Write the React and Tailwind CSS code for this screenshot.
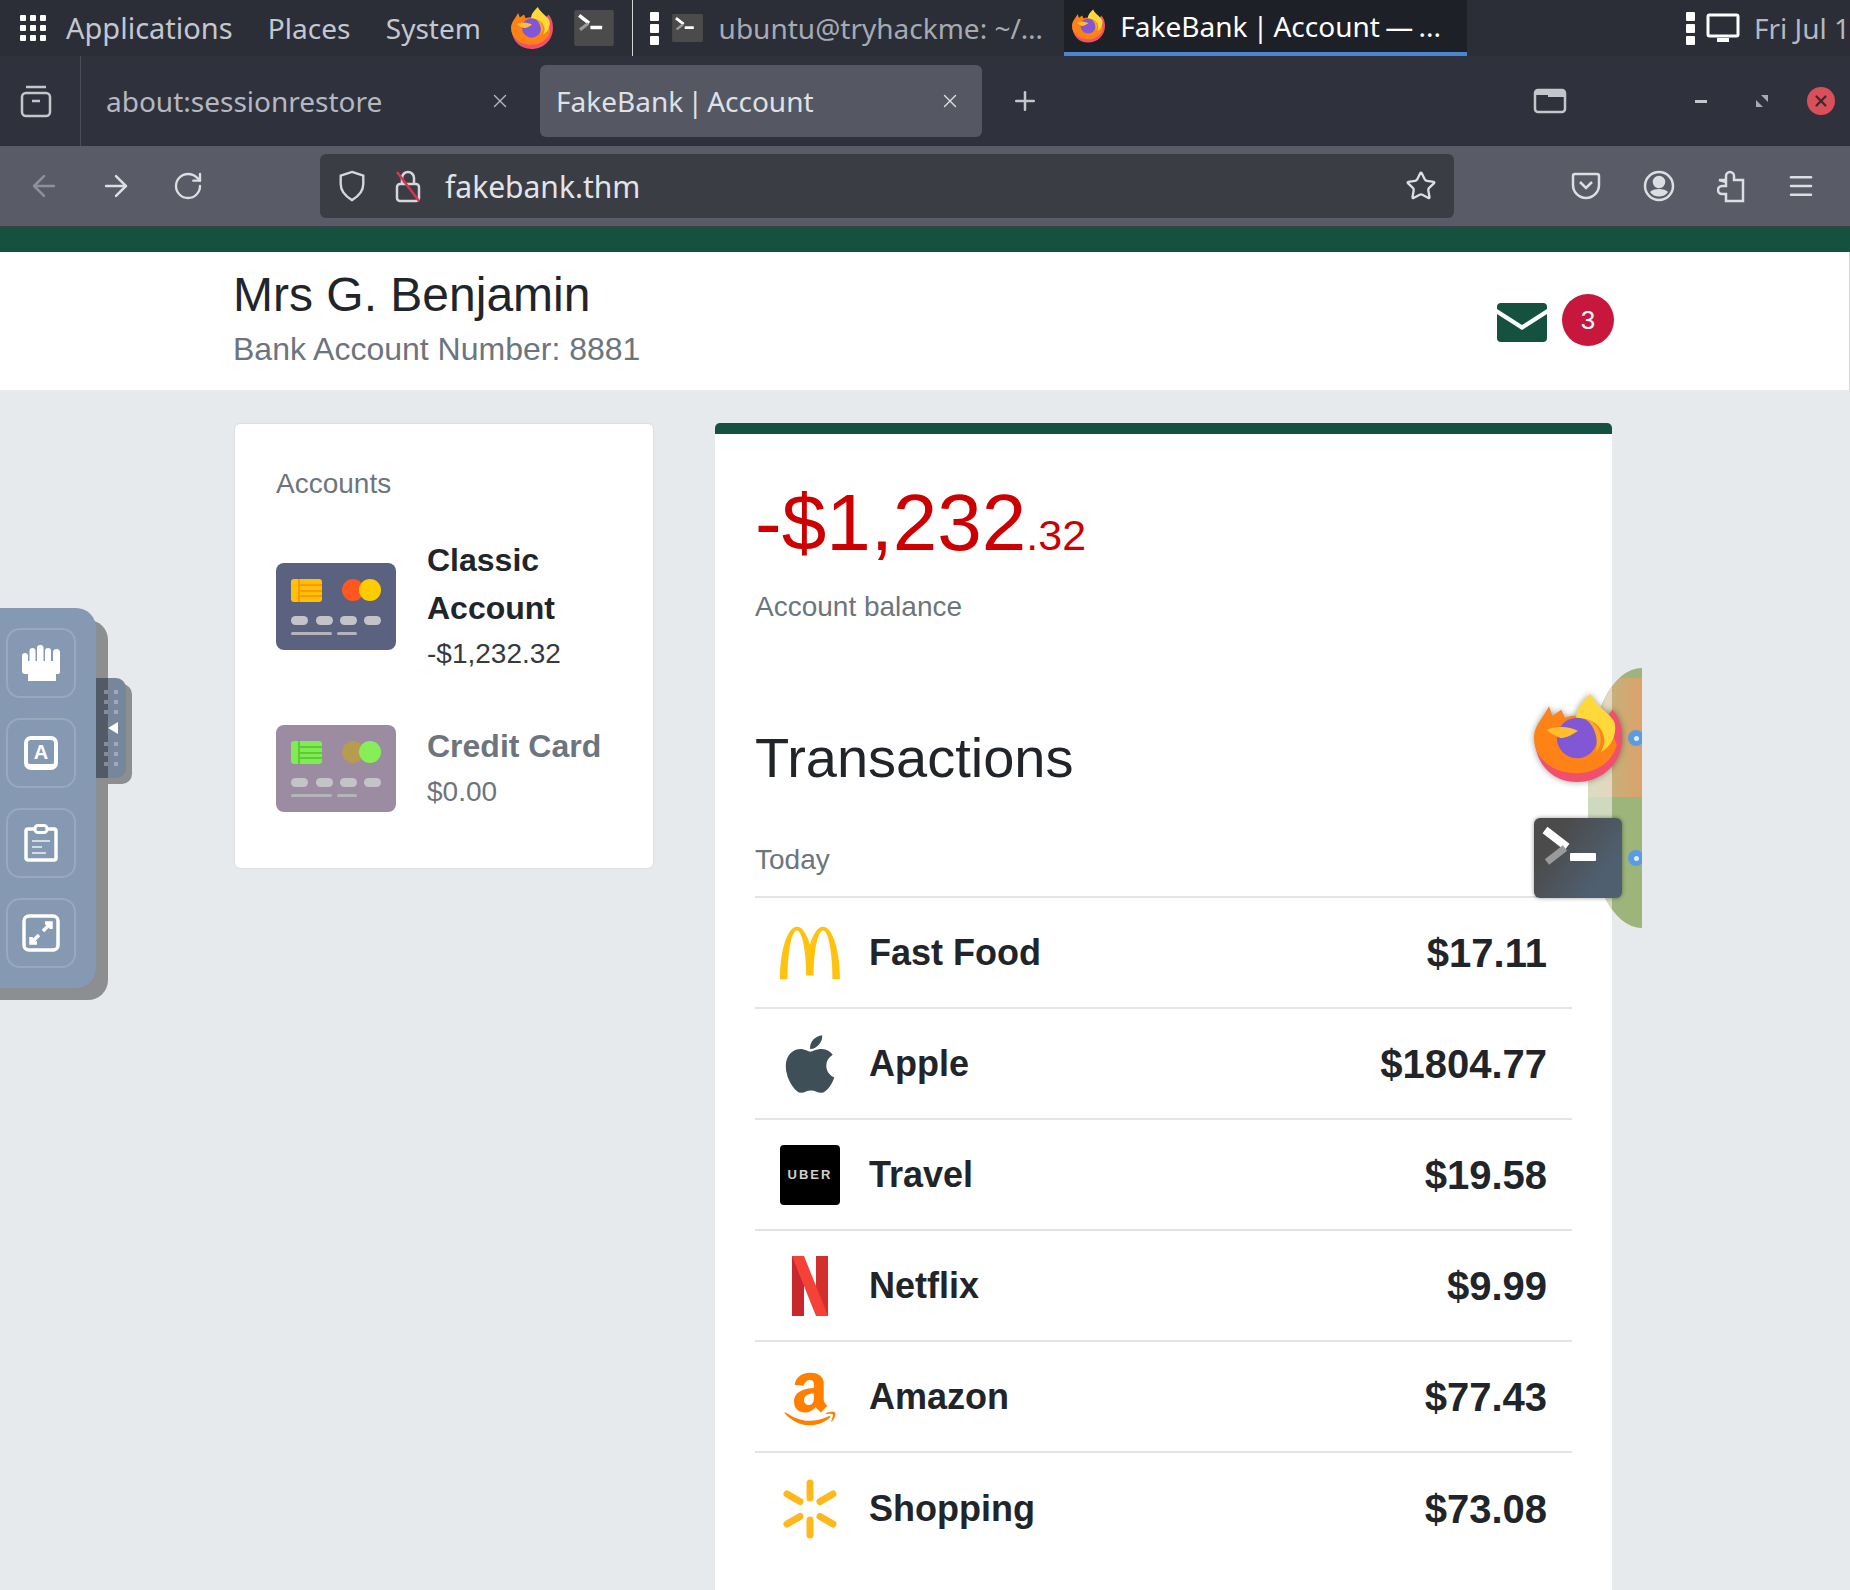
import { ArrowLeft, ArrowRight, Menu, Plus, RotateCw, Star, X } from "lucide-react";
import { FaAmazon, FaApple } from "react-icons/fa";
import { SiMcdonalds } from "react-icons/si";

const FirefoxIcon = ({ className }) => (
  <svg viewBox="0 0 100 100" className={className}>
    <path d="M89 18C98 28 100 40 100 50C100 80 76 100 49 100C22 100 4 82 1 55L50 70z" fill="#f0506e" />
    <path d="M0 50C0 36 10 28 17 14L21 25L31 18L35 27C42 24 50 24 56 26C75 32 90 40 94 58C88 80 68 90 48 90C20 90 0 72 0 50z" fill="#ff8216" />
    <path d="M64 0C54 10 47 18 48 28C62 26 78 34 80 52C80 58 78 62 76 66C88 60 94 46 92 34C90 24 70 14 64 0z" fill="#ffd93a" />
    <circle cx="49" cy="50" r="23" fill="#8257d6" />
    <path d="M58 28C68 30 76 40 76 52C76 58 74 62 70 66C73 56 72 38 58 28z" fill="#f9a62b" />
    <path d="M14 41C24 36 40 36 50 42C42 47 36 50 30 50C24 48 18 44 14 41z" fill="#ffbe2e" />
  </svg>
);

const TerminalIcon = ({ className, large }) => (
  <svg viewBox="0 0 88 80" className={className}>
    <defs>
      <linearGradient id="termShade" x1="0.4" y1="0" x2="1" y2="0.4">
        <stop offset="0" stopColor="#4b4b4b" />
        <stop offset="1" stopColor="#4f5f70" />
      </linearGradient>
    </defs>
    <rect width="88" height="80" rx={large ? 6 : 4} fill={large ? "url(#termShade)" : "#4b4b4b"} />
    <path d="M11 12l22 17" stroke="#fff" strokeWidth="8" fill="none" />
    <path d="M31 30L13 44" stroke="#9a9a9a" strokeWidth="7" fill="none" />
    <rect x="36" y="35" width="26" height="8" rx="1" fill="#fff" />
  </svg>
);

const BankCard = ({ bg, chip, chipLine, left, right }) => (
  <svg viewBox="0 0 120 87" className="w-[120px] h-[87px] shrink-0">
    <rect width="120" height="87" rx="8" fill={bg} />
    <rect x="15" y="16" width="31" height="23" rx="3" fill={chip} />
    <path d="M23 16v23M23 22h23M23 28h23M23 33h23" stroke={chipLine} strokeWidth="2" />
    <circle cx="77" cy="27" r="11" fill={left} />
    <circle cx="94" cy="27" r="11" fill={right} />
    <rect x="15" y="53" width="17" height="9" rx="4.5" fill="#c4c4c8" />
    <rect x="40" y="53" width="17" height="9" rx="4.5" fill="#c4c4c8" />
    <rect x="64" y="53" width="17" height="9" rx="4.5" fill="#c4c4c8" />
    <rect x="88" y="53" width="17" height="9" rx="4.5" fill="#c4c4c8" />
    <rect x="15" y="69" width="41" height="3" rx="1.5" fill="#b4b4ba" />
    <rect x="61" y="69" width="20" height="3" rx="1.5" fill="#b4b4ba" />
  </svg>
);

const NetflixLogo = () => (
  <svg viewBox="0 0 36 60" className="w-[36px] h-[60px]">
    <path d="M0 0h12v60L0 60z" fill="#c8282d" />
    <path d="M24 0h12v60l-12-2z" fill="#d32f2f" />
    <path d="M0 0h12l24 60H24z" fill="#f44336" />
  </svg>
);

const UberLogo = () => (
  <div className="w-[60px] h-[60px] rounded bg-black flex items-center justify-center">
    <span className="text-[13px] font-bold tracking-[2px] text-[#cfcfcf]">UBER</span>
  </div>
);

const WalmartSpark = () => (
  <svg viewBox="0 0 54 60" className="w-[54px] h-[60px]" fill="none" stroke="#ffb81c" strokeWidth="7" strokeLinecap="round">
    <path d="M27 4v15M27 41v15" />
    <path d="M4 15l13 7.500M37 37.500l13 7.500" />
    <path d="M50 15l-13 7.500M17 37.500l-13 7.500" />
  </svg>
);

const transactions = [
  { name: "Fast Food", amount: "$17.11", icon: <SiMcdonalds className="w-[64px] h-[64px] text-[#ffc20e]" /> },
  { name: "Apple", amount: "$1804.77", icon: <FaApple className="w-[66px] h-[66px] shrink-0 text-[#3f4f57]" /> },
  { name: "Travel", amount: "$19.58", icon: <UberLogo /> },
  { name: "Netflix", amount: "$9.99", icon: <NetflixLogo /> },
  { name: "Amazon", amount: "$77.43", icon: <FaAmazon className="w-[60px] h-[60px] shrink-0 mt-[4px] text-[#ff8000]" /> },
  { name: "Shopping", amount: "$73.08", icon: <WalmartSpark /> },
];

const SideButton = ({ children }) => (
  <div className="w-[70px] h-[70px] rounded-[14px] border-2 border-white/15 flex items-center justify-center">
    {children}
  </div>
);

const SidePanel = () => (
  <div className="absolute left-0 top-[608px]">
    <div className="absolute left-0 top-[12px] w-[108px] h-[380px] rounded-r-[20px] bg-[#8c8e90]" />
    <div className="absolute left-[96px] top-[76px] w-[36px] h-[100px] rounded-r-[10px] bg-[#8c8e90]" />
    <div className="absolute left-[96px] top-[70px] w-[30px] h-[100px] rounded-r-[10px] bg-[#76869b] overflow-hidden">
      <div className="absolute left-0 top-0 w-[12px] h-full bg-[#525a68]" />
      <div className="absolute left-[8px] top-[12px] grid grid-cols-2 gap-x-[6px] gap-y-[6px]">
        {[0, 1, 2, 3, 4, 5].map((i) => (
          <span key={i} className="w-[4px] h-[4px] bg-white/30" />
        ))}
      </div>
      <div className="absolute left-[8px] top-[64px] grid grid-cols-2 gap-x-[6px] gap-y-[6px]">
        {[0, 1, 2, 3, 4, 5].map((i) => (
          <span key={i} className="w-[4px] h-[4px] bg-white/30" />
        ))}
      </div>
      <svg viewBox="0 0 10 12" className="absolute left-[12px] top-[44px] w-[10px] h-[12px]">
        <path d="M10 0v12L0 6z" fill="#fff" />
      </svg>
    </div>
    <div className="relative w-[96px] h-[380px] rounded-r-[20px] bg-[#8699b2] pl-[6px] pt-[20px] flex flex-col gap-[20px]">
      <SideButton>
        <svg viewBox="0 0 38 36" className="w-[38px] h-[36px]" fill="#fff">
          <rect x="0" y="8" width="6" height="20" rx="3" />
          <rect x="7.500" y="3" width="6" height="20" rx="3" />
          <rect x="15" y="0" width="6.500" height="20" rx="3" />
          <rect x="23" y="3" width="6" height="20" rx="3" />
          <rect x="31" y="4" width="7" height="20" rx="3.500" />
          <path d="M0 16h38v11a2 2 0 0 1-2 2h-2v7H6v-7H3a3 3 0 0 1-3-3z" />
        </svg>
      </SideButton>
      <SideButton>
        <div className="w-[34px] h-[34px] rounded-[7px] border-[4px] border-b-[6px] border-white flex items-center justify-center">
          <span className="text-[20px] font-bold leading-none text-white font-['Liberation_Sans',sans-serif]">A</span>
        </div>
      </SideButton>
      <SideButton>
        <svg viewBox="0 0 34 38" className="w-[34px] h-[38px]" fill="none" stroke="#fff">
          <rect x="2" y="5" width="30" height="31" rx="2" strokeWidth="3.500" />
          <rect x="11" y="1.500" width="12" height="7" rx="3" strokeWidth="3" fill="#8699b2" />
          <path d="M8 17h18M8 23h10M8 29h14" strokeWidth="2" stroke="#d5dbe4" />
        </svg>
      </SideButton>
      <SideButton>
        <svg viewBox="0 0 38 38" className="w-[38px] h-[38px]" fill="none" stroke="#fff">
          <rect x="2" y="2" width="34" height="34" rx="5" strokeWidth="3.500" />
          <path d="M21 17l8-8M23 9h6v6M17 21l-8 8M9 23v6h6" strokeWidth="3.500" />
        </svg>
      </SideButton>
    </div>
  </div>
);

const Dock = () => (
  <>
    <div className="absolute left-[1588px] top-[668px] w-[54px] h-[260px] rounded-tl-[54px_110px] rounded-bl-[54px_110px] overflow-hidden bg-[#9db57a]">
      <div className="absolute left-0 top-[10px] w-full h-[119px] bg-gradient-to-r from-[#b4b98a] to-[#dba268]" />
      <div className="absolute left-0 top-0 w-[24px] h-full bg-white/50" />
      <div className="absolute left-[40px] top-[62px] w-[16px] h-[16px] rounded-full bg-[#5b9be0] flex items-center justify-center">
        <span className="w-[5px] h-[5px] rounded-full bg-white/80" />
      </div>
      <div className="absolute left-[40px] top-[182px] w-[16px] h-[16px] rounded-full bg-[#5b9be0] flex items-center justify-center">
        <span className="w-[5px] h-[5px] rounded-full bg-white/80" />
      </div>
    </div>
    <FirefoxIcon className="absolute left-[1534px] top-[693px] w-[88px] h-[90px] drop-shadow-[0_0_3px_rgba(0,0,0,0.4)]" />
    <TerminalIcon large className="absolute left-[1534px] top-[818px] w-[88px] h-[80px] drop-shadow-[0_0_2px_rgba(0,0,0,0.4)]" />
  </>
);

const TopPanel = () => (
  <div className="h-[56px] bg-[#2b2e37] flex items-center text-[28px] text-[#c3c7d0] font-['Noto_Sans',sans-serif] overflow-hidden whitespace-nowrap">
    <div className="ml-[20px] w-[26px] h-[26px] grid grid-cols-3 gap-[4px]">
      {[0, 1, 2, 3, 4, 5, 6, 7, 8].map((i) => (
        <span key={i} className="bg-white rounded-[1px]" />
      ))}
    </div>
    <span className="ml-[20px] w-[169px] text-[29px]">Applications</span>
    <span className="ml-[33px] w-[85px]">Places</span>
    <span className="ml-[33px] w-[97px]">System</span>
    <FirefoxIcon className="ml-[28px] w-[42px] h-[42px]" />
    <TerminalIcon className="ml-[21px] w-[40px] h-[36px]" />
    <div className="ml-[18px] w-[1px] h-full bg-white/80" />
    <div className="ml-[17px] w-[9px] flex flex-col gap-[3px]">
      <span className="h-[9px] bg-white rounded-[1px]" />
      <span className="h-[9px] bg-white rounded-[1px]" />
      <span className="h-[9px] bg-white rounded-[1px]" />
    </div>
    <TerminalIcon className="ml-[13px] w-[31px] h-[28px]" />
    <span className="ml-[16px] w-[346px] text-[#a6aab3] overflow-hidden">ubuntu@tryhackme: ~/…</span>
    <div className="h-full w-[403px] bg-[#1e2028] border-b-4 border-[#4a86cf] flex items-center text-white">
      <FirefoxIcon className="ml-[8px] w-[33px] h-[36px]" />
      <span className="ml-[15px] [word-spacing:-2px]">FakeBank | Account — ...</span>
    </div>
    <div className="ml-[219px] w-[9px] flex flex-col gap-[3px]">
      <span className="h-[9px] bg-white rounded-[1px]" />
      <span className="h-[9px] bg-white rounded-[1px]" />
      <span className="h-[9px] bg-white rounded-[1px]" />
    </div>
    <svg viewBox="0 0 34 30" className="ml-[11px] w-[34px] h-[30px] shrink-0" fill="none" stroke="#fff" strokeWidth="3">
      <rect x="2" y="2" width="30" height="21" rx="1.500" />
      <path d="M11 27h12" strokeWidth="4" />
    </svg>
    <span className="ml-[14px] text-[#b5b8c0]">Fri Jul 1</span>
  </div>
);

const TabBar = () => (
  <div className="h-[90px] bg-[#2f323d] flex items-center font-['Noto_Sans',sans-serif] text-[28px] whitespace-nowrap">
    <svg viewBox="0 0 32 34" className="ml-[20px] w-[32px] h-[34px]" fill="none" stroke="#c4c6cc" strokeWidth="2.500">
      <rect x="2" y="9" width="28" height="23" rx="4" />
      <path d="M6 3h20" />
      <path d="M12 17h8" />
    </svg>
    <div className="ml-[28px] w-[1px] h-full bg-[#4a4d58]" />
    <span className="ml-[25px] w-[394px] text-[#b5b8c0]">about:sessionrestore</span>
    <div className="-ml-[20px] w-[40px] flex justify-center">
      <X className="w-[22px] h-[22px] text-[#b5b8c0]" strokeWidth={1.5} />
    </div>
    <div className="ml-[20px] w-[442px] h-[72px] rounded-[6px] bg-[#555762] flex items-center text-[#dfe1e6] pl-[16px]">
      <span className="w-[383px] [word-spacing:-3px]">FakeBank | Account</span>
      <X className="w-[22px] h-[22px] text-[#dfe1e6]" strokeWidth={1.5} />
    </div>
    <Plus className="ml-[28px] w-[30px] h-[30px] text-[#c4c6cc]" strokeWidth={2} />
    <svg viewBox="0 0 34 26" className="ml-[493px] w-[34px] h-[26px]" fill="none" stroke="#c4c6cc" strokeWidth="2.500">
      <rect x="2" y="2" width="30" height="22" rx="3" />
      <path d="M2 2h30v7H15v-2H2z" fill="#c4c6cc" stroke="none" />
    </svg>
    <span className="ml-[128px] w-[12px] h-[3px] bg-[#c4c6cc]" />
    <svg viewBox="0 0 14 14" className="ml-[48px] w-[14px] h-[14px]" fill="#a9abb2">
      <path d="M6 1h7v7zM8 13H1V6z" />
    </svg>
    <div className="ml-[38px] w-[28px] h-[28px] rounded-full bg-[#d9505a] flex items-center justify-center">
      <X className="w-[18px] h-[18px] text-[#3a2a30]" strokeWidth={3} />
    </div>
  </div>
);

const Toolbar = () => (
  <div className="h-[82px] bg-[#595b66] border-b-2 border-[#3b3d47] flex items-center text-[#dcdee3]">
    <ArrowLeft className="ml-[27px] w-[34px] h-[34px] text-[#8f919a]" strokeWidth={1.75} />
    <ArrowRight className="ml-[38px] w-[34px] h-[34px]" strokeWidth={1.75} />
    <RotateCw className="ml-[39px] w-[32px] h-[32px]" strokeWidth={1.75} />
    <div className="ml-[116px] w-[1134px] h-[64px] rounded-[6px] bg-[#3b3d45] flex items-center">
      <svg viewBox="0 0 30 34" className="ml-[17px] w-[30px] h-[32px]" fill="none" stroke="#d5d7dc" strokeWidth="2.500">
        <path d="M15 2l12 4v9c0 8-5 13-12 17C8 28 3 23 3 15V6z" />
      </svg>
      <svg viewBox="0 0 30 34" className="ml-[26px] w-[30px] h-[34px]" fill="none" stroke="#d5d7dc" strokeWidth="2.500">
        <rect x="4" y="15" width="22" height="17" rx="3" />
        <path d="M9 15V9a6 6 0 0 1 12 0v6" />
        <path d="M4 3l22 29" stroke="#d9344f" />
      </svg>
      <span className="ml-[22px] text-[30px] text-[#e3e4e8] font-['Noto_Sans',sans-serif]">fakebank.thm</span>
      <Star className="ml-auto mr-[17px] w-[32px] h-[32px]" strokeWidth={1.75} />
    </div>
    <svg viewBox="0 0 30 28" className="ml-[117px] w-[30px] h-[28px]" fill="none" stroke="#dcdee3" strokeWidth="2.500">
      <path d="M2 4a2 2 0 0 1 2-2h22a2 2 0 0 1 2 2v9a13 13 0 0 1-26 0z" />
      <path d="M9 10l6 6 6-6" />
    </svg>
    <svg viewBox="0 0 32 32" className="ml-[42px] w-[32px] h-[32px]" fill="none" stroke="#dcdee3" strokeWidth="2.500">
      <circle cx="16" cy="16" r="14" />
      <circle cx="16" cy="12" r="5" fill="#dcdee3" />
      <path d="M7 22c3-4 15-4 18 0-4 6-14 6-18 0z" fill="#dcdee3" stroke="none" />
    </svg>
    <svg viewBox="0 0 28 34" className="ml-[42px] w-[28px] h-[34px]" fill="none" stroke="#dcdee3" strokeWidth="2.500">
      <path d="M2 11h7V7a4 4 0 0 1 8 0v4h9v21H9v-7H5a4 4 0 0 1 0-8h4v-4z" />
    </svg>
    <Menu className="ml-[41px] w-[30px] h-[30px]" strokeWidth={2} />
  </div>
);

export default function App() {
  return (
    <div className="relative w-[1850px] h-[1590px] overflow-hidden bg-[#e7eaed] font-['Liberation_Sans',sans-serif] text-[#212529]">
      <TopPanel />
      <TabBar />
      <Toolbar />
      <div className="h-[24px] bg-[#14523f]" />

      <header className="h-[138px] bg-white border-r border-[#d4d4d4] pl-[233px] flex items-center">
        <div className="w-[1264px] self-start pt-[14px]">
          <h1 className="text-[48px] leading-[58px]">Mrs G. Benjamin</h1>
          <p className="mt-[6px] text-[32px] leading-[38px] text-[#6c757d]">Bank Account Number: 8881</p>
        </div>
        <svg viewBox="0 0 50 39" className="mt-[2px] w-[50px] h-[39px]">
          <path d="M4 0h42a4 4 0 0 1 4 4v2L25 22 0 6V4a4 4 0 0 1 4-4z" fill="#14523f" />
          <path d="M0 11l25 16 25-16v24a4 4 0 0 1-4 4H4a4 4 0 0 1-4-4z" fill="#14523f" />
        </svg>
        <div className="ml-[15px] -mt-[2px] w-[52px] h-[52px] rounded-full bg-[#c8173d] flex items-center justify-center text-[26px] text-white">3</div>
      </header>

      <main className="pl-[235px] pt-[33px] flex items-start">
        <section className="mt-[1px] w-[418px] h-[444px] bg-white rounded-[5px] shadow-[0_0_2px_rgba(0,0,0,0.15)] pl-[41px] pt-[43px]">
          <h2 className="text-[28px] leading-[34px] text-[#6c757d]">Accounts</h2>
          <div className="mt-[35px] flex items-center gap-[31px]">
            <BankCard bg="#5a6280" chip="#ffc107" chipLine="#ff9800" left="#ff5722" right="#ffcc00" />
            <div>
              <div className="text-[32px] leading-[48px] font-bold">Classic<br />Account</div>
              <div className="text-[28px] leading-[44px] text-[#343a40]">-$1,232.32</div>
            </div>
          </div>
          <div className="mt-[46px] flex items-center gap-[31px] text-[#6c757d]">
            <BankCard bg="#9c8ca2" chip="#7ded52" chipLine="#5fc93a" left="#b59c4f" right="#86ef58" />
            <div>
              <div className="text-[32px] leading-[48px] font-bold">Credit Card</div>
              <div className="text-[28px] leading-[44px]">$0.00</div>
            </div>
          </div>
        </section>

        <section className="ml-[62px] w-[897px] h-[1200px] bg-white border-t-[11px] border-[#14523f] rounded-t-[5px] px-[40px]">
          <div className="mt-[43px] text-[#cc0000] leading-[92px] text-[80px]">
            -$1,232<span className="text-[43px]">.32</span>
          </div>
          <p className="mt-[9px] text-[28px] leading-[34px] text-[#6c757d]">Account balance</p>
          <h2 className="mt-[100px] text-[56px] leading-[68px]">Transactions</h2>
          <p className="mt-[51px] text-[28px] leading-[34px] text-[#6c757d]">Today</p>
          <ul className="mt-[19px] border-t-2 border-[#e2e5e8]">
            {transactions.map((t, i) => (
              <li key={t.name} className={`h-[111px] flex items-center ${i < transactions.length - 1 ? "border-b-2 border-[#e2e5e8]" : ""}`}>
                <div className="ml-[25px] w-[60px] flex justify-center">{t.icon}</div>
                <span className="ml-[29px] text-[36px] font-bold">{t.name}</span>
                <span className="ml-auto mr-[25px] text-[40px] font-bold">{t.amount}</span>
              </li>
            ))}
          </ul>
        </section>
      </main>

      <SidePanel />
      <Dock />
    </div>
  );
}
